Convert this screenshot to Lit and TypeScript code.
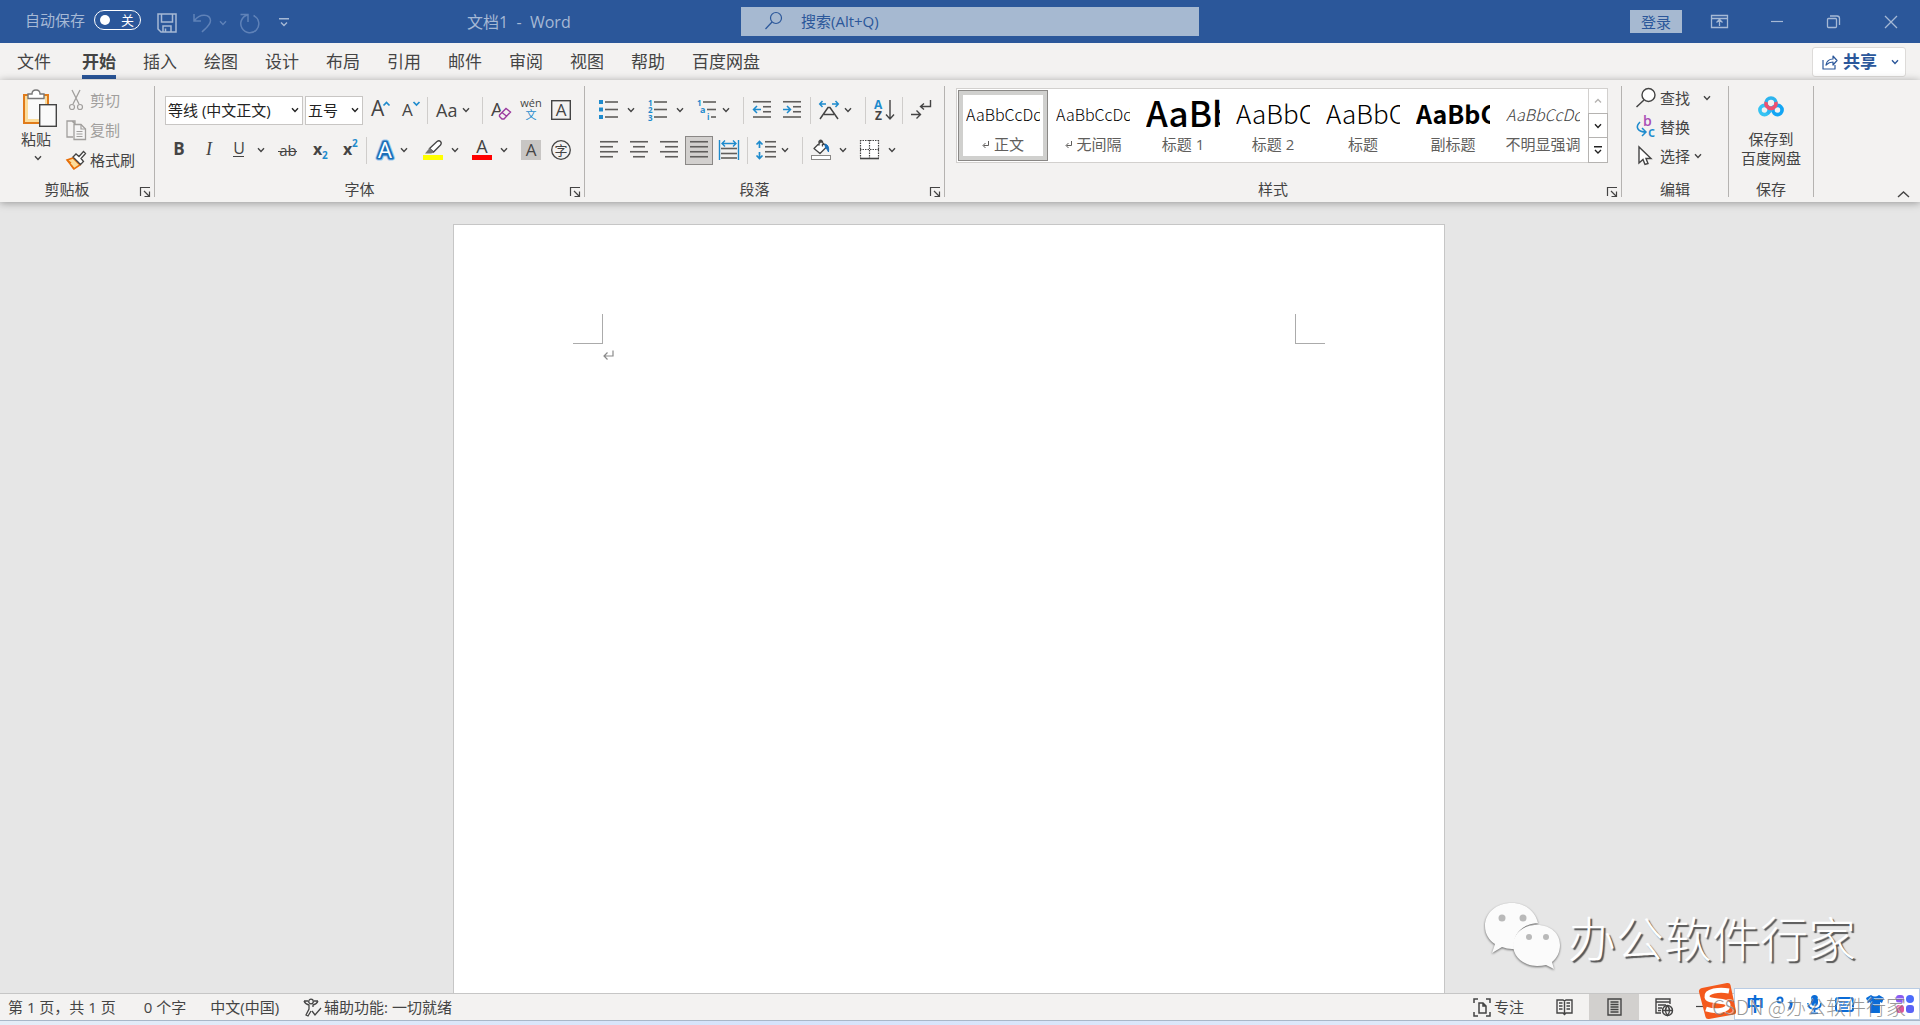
import { LitElement, html, svg, css, SVGTemplateResult, TemplateResult } from "lit";
import { customElement, state } from "lit/decorators.js";
import { classMap } from "lit/directives/class-map.js";

const icon = (content: SVGTemplateResult, w = 20, h = 20) =>
  html`<svg class="icon" width=${w} height=${h} viewBox="0 0 ${w} ${h}" aria-hidden="true">${content}</svg>`;

const chevron = () =>
  html`<svg class="icon" width="8" height="6" viewBox="0 0 8 6" aria-hidden="true">
    <path d="M1 1.2L4 4.4L7 1.2" fill="none" stroke="currentColor" stroke-width="1.4" />
  </svg>`;

const INK = "#444444";
const LINE = "#605e5c";
const BLUE = "#1e8bcd";

const hline = (x1: number, x2: number, y: number) =>
  svg`<path d="M${x1} ${y}H${x2}" stroke=${LINE} stroke-width="1.6" />`;

const glyph = (t: string, x: number, y: number, size: number, color = INK, weight = 400, anchor = "start") =>
  svg`<text x=${x} y=${y} font-size=${size} fill=${color} font-weight=${weight} text-anchor=${anchor}>${t}</text>`;

const icons = {
  grow: svg`${glyph("A", 2, 16, 21)}<path d="M14.5 5.5l3-3 3 3" fill="none" stroke=${BLUE} stroke-width="1.7" />`,
  shrink: svg`${glyph("A", 3, 16, 17)}<path d="M14.5 2l3 3 3-3" fill="none" stroke=${BLUE} stroke-width="1.7" />`,
  clear: svg`${glyph("A", 0, 16, 19)}
    <path d="M8.5 14.5L15 8l4.5 4-6.5 7h-2l-2.500-2.500z" fill="#f3f2f1" stroke="#f3f2f1" stroke-width="3" />
    <path d="M8.500 15L15 8.500l4.500 3.500-6.500 7h-2l-2.500-2.500zM11 12.500l5 4" fill="none" stroke="#9b3b9f" stroke-width="1.400" />`,
  phonetic: svg`${glyph("wén", 10, 7, 11, INK, 400, "middle")}${glyph("文", 10, 19, 11, BLUE, 400, "middle")}`,
  boxed: svg`<rect x="0.700" y="0.700" width="18.600" height="18.600" fill="none" stroke=${INK} stroke-width="1.400" />${glyph("A", 10, 16, 17, INK, 400, "middle")}`,
  bold: glyph("B", 10, 15, 17, INK, 700, "middle"),
  italic: svg`<text x="10" y="15" font-size="18" fill=${INK} font-style="italic" font-family="Liberation Serif" text-anchor="middle">I</text>`,
  underline: svg`${glyph("U", 10, 14, 16, INK, 400, "middle")}<path d="M4 16.500h11" stroke=${INK} stroke-width="1" />`,
  strike: svg`${glyph("ab", 10, 16, 15, INK, 400, "middle")}<path d="M0 11.500h19" stroke=${INK} stroke-width="1" />`,
  sub: svg`${glyph("x", 5, 15, 16, INK, 700)}${glyph("2", 14, 19, 10, BLUE, 700)}`,
  sup: svg`${glyph("x", 5, 15, 16, INK, 700)}${glyph("2", 14, 7, 10, BLUE, 700)}`,
  effect: svg`<g font-size="22" font-weight="600" text-anchor="middle" stroke-linejoin="round">
      <text x="10" y="18" fill="#9cc9ee" stroke="#9cc9ee" stroke-width="5">A</text>
      <text x="10" y="18" fill="#ffffff" stroke="#1a6fb8" stroke-width="3">A</text>
      <text x="10" y="18" fill="#ffffff" font-weight="400">A</text></g>`,
  highlight: svg`<path d="M6.500 8.500L14 1.500q2-1.500 3.500 0t0 3.500L10.500 12z" fill="#ffffff" stroke=${INK} stroke-width="1.300" />
    <path d="M6.500 8L11 12.500 8 13.500H2z" fill="#777777" /><rect x="0" y="15" width="20" height="5" fill="#ffff00" />`,
  color: svg`${glyph("A", 10, 13, 18, INK, 400, "middle")}<rect x="0" y="15" width="20" height="5" fill="#ff0000" />`,
  shade: svg`<rect width="20" height="20" fill="#c8c6c4" />${glyph("A", 10, 16, 17, INK, 400, "middle")}`,
  circled: svg`<circle cx="10" cy="10" r="9.300" fill="none" stroke=${INK} stroke-width="1.300" />${glyph("字", 10, 15, 13, INK, 400, "middle")}`,
  bullets: svg`<path d="M0 0h4v4H0zM0 7.500h4v4H0zM0 15h4v4H0z" fill=${BLUE} />${[2, 9.5, 17].map((y) => hline(6, 19, y))}`,
  numbers: svg`${["1", "2", "3"].map((n, i) => glyph(n, 0, 5.5 + i * 7.5, 8, BLUE, 700))}${[2, 9.5, 17].map((y) => hline(6, 19, y))}`,
  multi: svg`${glyph("1", 0, 5.5, 8, BLUE, 700)}${glyph("a", 3, 13, 9, BLUE, 700)}${glyph("i", 10, 20, 8, BLUE, 700)}${hline(6, 19, 2)}${hline(10, 19, 9.5)}${hline(14, 19, 17)}`,
  outdent: svg`${hline(1, 19, 1.75)}${hline(11, 19, 6.75)}${hline(11, 19, 11.75)}${hline(1, 19, 17)}<path d="M9 9.500H2M5 6L1.500 9.500 5 13" fill="none" stroke=${BLUE} stroke-width="1.500" />`,
  indent: svg`${hline(1, 19, 1.75)}${hline(11, 19, 6.75)}${hline(11, 19, 11.75)}${hline(1, 19, 17)}<path d="M1 9.500H8M5 6L8.500 9.500 5 13" fill="none" stroke=${BLUE} stroke-width="1.500" />`,
  scale: svg`<path d="M1 19L9 7.500h2L19 19M5 14.500h10" fill="none" stroke=${INK} stroke-width="1.500" />
    <path d="M7 4H1M3.500 1L0.700 4 3.500 7M13 4h6M16.500 1L19.300 4 16.500 7" fill="none" stroke=${BLUE} stroke-width="1.500" />`,
  sort: svg`${glyph("A", 0, 9, 12, BLUE, 700)}${glyph("Z", 1, 20, 12, INK, 700)}<path d="M16 0v19M12 14.500l4 4.500 4-4.500" fill="none" stroke=${INK} stroke-width="1.400" />`,
  marks: svg`<path d="M19.500 0V6.500H10M13 3.500l-3.500 3 3.500 3M0 14.500h9M5.500 10.500l4 4-4 4" fill="none" stroke=${INK} stroke-width="1.400" />`,
  left: svg`${hline(1, 19, 1.75)}${hline(1, 14, 6.75)}${hline(1, 19, 11.75)}${hline(1, 14, 16.75)}`,
  center: svg`${hline(1, 19, 1.75)}${hline(4, 16, 6.75)}${hline(1, 19, 11.75)}${hline(4, 16, 16.75)}`,
  right: svg`${hline(1, 19, 1.75)}${hline(6, 19, 6.75)}${hline(1, 19, 11.75)}${hline(6, 19, 16.75)}`,
  justify: svg`${[1.75, 6.75, 11.75, 16.75].map((y) => hline(1, 19, y))}`,
  distribute: svg`<path d="M0.500 0v20M19.500 0v20M3 3.500h14M6 0.500L3 3.500l3 3M14 0.500l3 3-3 3" fill="none" stroke=${BLUE} stroke-width="1.400" />${[8.5, 13.5, 18].map((y) => hline(2, 18, y))}`,
  spacing: svg`<path d="M3.500 1.500v6.500M0.500 4.500l3-3 3 3M3.500 12v6.500M0.500 15.500l3 3 3-3" fill="none" stroke=${BLUE} stroke-width="1.700" />${[1.75, 6.75, 11.75, 16.75].map((y) => hline(9, 20, y))}`,
  fill: svg`<path d="M10 1.500L3 8.500l6 5 7-7zM8 5.500V1.500q2-2.500 3.500 0v5" fill="#ffffff" stroke=${INK} stroke-width="1.300" stroke-linejoin="round" />
    <path d="M14 4q4.500 1 3.500 8q-1.500-4-3-4z" fill="#1a6fb8" stroke="#1a6fb8" /><rect x="0.500" y="15.500" width="19" height="4" fill="#ffffff" stroke="#8a8886" />`,
  border: svg`<rect x="0.500" y="0.500" width="18" height="18" fill="#ffffff" />
    <path d="M0 0.500h19M0.500 0v18M18.500 0v18M9.500 0v18M0 9.500h19" fill="none" stroke=${INK} stroke-width="1.200" stroke-dasharray="1.500 1" />
    <path d="M0 18.500h19" stroke=${INK} stroke-width="1.600" />`,
  paste: svg`<path d="M2 6h24v28H2z" fill="#fbdc9b" stroke="#e07b1a" stroke-width="2" /><path d="M6 9h17v21H6z" fill="#fafafa" />
    <path d="M6 9.500V5h4q0-4 4-4t4 4h4v4.500z" fill="#ffffff" stroke="#777777" stroke-width="1.400" />
    <rect x="17.700" y="15.700" width="16.600" height="21.600" fill="#fafafa" stroke="#444444" stroke-width="1.400" />`,
  cut: svg`<path d="M6 0l7 14M14 0L7 14" fill="none" stroke="#a19f9d" stroke-width="1.300" /><circle cx="6" cy="17" r="2.500" fill="none" stroke="#a19f9d" stroke-width="1.200" /><circle cx="14" cy="17" r="2.500" fill="none" stroke="#a19f9d" stroke-width="1.200" />`,
  copy: svg`<path d="M7 17H1V1h5l3 3M6 1h3v3" fill="none" stroke="#a19f9d" stroke-width="1.300" /><path d="M8 4.500h7l4.500 4.500v10.500H8z" fill="#f5f5f5" stroke="#a19f9d" stroke-width="1.300" /><path d="M15 4.500V9h4.500M10.500 11.500h6M10.500 14h6M10.500 16.500h6" fill="none" stroke="#a19f9d" stroke-width="1.200" />`,
  brush: svg`<path d="M1 10l6-2 7 7-6 4z" fill="#fbdc9b" stroke="#e8700a" stroke-width="1.600" /><path d="M1 10l4 3M8 19l-3-4" stroke="#e8700a" stroke-width="1.500" />
    <path d="M7 7l3-3 3 2.500L17.500 1.500l2 2L15 8.500l2.500 3-3 3z" fill="#ffffff" stroke="#444444" stroke-width="1.300" />`,
  find: svg`<circle cx="12.500" cy="7" r="6.500" fill="#ffffff" stroke=${INK} stroke-width="1.400" /><path d="M8 12L0.500 19" stroke=${INK} stroke-width="1.500" />`,
  replace: svg`${glyph("b", 7, 9, 14, "#a94db5", 600)}${glyph("c", 12, 20, 14, BLUE, 600)}<path d="M4 5q-4 4-2 7t8 3M6 11l4 4-4 4" fill="none" stroke=${BLUE} stroke-width="1.500" />`,
  select: svg`<path d="M3 1v16l4-3.500 2 5 3-1-2-5h5z" fill="#ffffff" stroke=${INK} stroke-width="1.400" />`,
  launcher: svg`<path d="M0.500 9V0.500H10M4 4l5 5M9.500 4.500v5h-5" fill="none" stroke=${INK} stroke-width="1.200" />`,
  save: svg`<path d="M1 1h18v18H4l-3-3zM4.500 1v8h11V1M6 19v-6h8v6M8.500 15.500V19" fill="none" stroke="currentColor" stroke-width="1.500" />`,
  undo: svg`<path d="M1 1v7h7M1.500 7.500C7 0 17 1 17.500 7.500C17.500 12 13 15 9 19" fill="none" stroke="currentColor" stroke-width="1.500" />`,
  redo: svg`<path d="M0.500 1.500H8V9M13.500 2.500A9 9 0 1 1 7.500 2" fill="none" stroke="currentColor" stroke-width="1.500" />`,
  share: svg`<path d="M1 5v9h12v-4M4 10q1-6 7-6V1l4 4.500-4 4.500V7q-4 0-7 3z" fill="none" stroke="#2b579a" stroke-width="1.200" stroke-linejoin="round" />`,
  baidu: svg`<g fill="none" stroke-width="3.600"><circle cx="6.500" cy="14" r="4.600" stroke="#35c3f2" /><circle cx="19.500" cy="14" r="4.600" stroke="#12a5f4" />
    <path d="M9.500 17.500L16 10.500" stroke="#2bb7f5" /><circle cx="13" cy="7" r="5" stroke="#2cb4ee" /><path d="M8.200 6a5 5 0 1 0 9.600 0" stroke="#f0506e" /></g>`,
  access: svg`<g fill="none" stroke=${INK} stroke-width="1.300"><circle cx="8" cy="3.500" r="2.300" /><path d="M1 3q1 3 5 4v4l-3 6 2 1 3-5M15 3q-1 3-5 4v2M5 3H1M11 3h4M9 13l3 4 6-7" /></g>`,
  focus: svg`<g fill="none" stroke=${INK} stroke-width="1.500"><path d="M5 1H1v4M1 14v4h4M13 1h4v4M17 14v4h-4M6 5h4l3 3v7H6zM10 5v3h3" /></g>`,
  read: svg`<g fill="none" stroke=${INK} stroke-width="1.400"><path d="M1 2h6l1.500 1L10 2h6v13h-6l-1.500 1.500L7 15H1zM8.500 3v13M3 5h3.500M3 8h3.500M3 11h3.500M10.500 5H14M10.500 8H14M10.500 11H14" /></g>`,
  print: svg`<g fill="none" stroke=${INK} stroke-width="1.400"><path d="M1 1h13v16H1zM3.500 4h8M3.500 6.500h8M3.500 9h8M3.500 11.500h8M3.500 14h8" /></g>`,
  web: svg`<g fill="none" stroke=${INK} stroke-width="1.400"><path d="M6 15H1V1h14v5M1 4h14M3 7h8M3 10h4M3 12.500h3" /><circle cx="12.500" cy="12.500" r="5" /><path d="M7.500 12.500h10M12.500 7.500q-4 5 0 10q4-5 0-10" /></g>`,
};

type IconName = keyof typeof icons;
interface Tool { icon: IconName; label: string; drop?: "split" | "menu" }
type Entry = Tool | "|";

const fontRow1: Entry[] = [
  { icon: "grow", label: "增大字号" }, { icon: "shrink", label: "减小字号" }, "|",
];
const fontRow1b: Entry[] = [
  "|", { icon: "clear", label: "清除所有格式" }, { icon: "phonetic", label: "拼音指南" }, { icon: "boxed", label: "字符边框" },
];
const fontRow2: Entry[] = [
  { icon: "bold", label: "加粗" }, { icon: "italic", label: "倾斜" }, { icon: "underline", label: "下划线", drop: "split" },
  { icon: "strike", label: "删除线" }, { icon: "sub", label: "下标" }, { icon: "sup", label: "上标" }, "|",
  { icon: "effect", label: "文本效果", drop: "menu" }, { icon: "highlight", label: "突出显示", drop: "split" },
  { icon: "color", label: "字体颜色", drop: "split" }, { icon: "shade", label: "字符底纹" }, { icon: "circled", label: "带圈字符" },
];
const paraRow1: Entry[] = [
  { icon: "bullets", label: "项目符号", drop: "split" }, { icon: "numbers", label: "编号", drop: "split" },
  { icon: "multi", label: "多级列表", drop: "menu" }, "|",
  { icon: "outdent", label: "减少缩进量" }, { icon: "indent", label: "增加缩进量" }, "|",
  { icon: "scale", label: "中文版式", drop: "menu" }, "|", { icon: "sort", label: "排序" }, "|", { icon: "marks", label: "编辑标记" },
];
const paraRow2: Entry[] = [
  { icon: "left", label: "左对齐" }, { icon: "center", label: "居中" }, { icon: "right", label: "右对齐" },
  { icon: "justify", label: "两端对齐" }, { icon: "distribute", label: "分散对齐" }, "|",
  { icon: "spacing", label: "行和段落间距", drop: "menu" }, "|",
  { icon: "fill", label: "底纹", drop: "split" }, { icon: "border", label: "边框", drop: "split" },
];

const tabs = ["文件", "开始", "插入", "绘图", "设计", "布局", "引用", "邮件", "审阅", "视图", "帮助", "百度网盘"];

const gallery = [
  { name: "正文", sample: "AaBbCcDd", kind: "body", mark: true },
  { name: "无间隔", sample: "AaBbCcDd", kind: "body", mark: true },
  { name: "标题 1", sample: "AaBb", kind: "h1" },
  { name: "标题 2", sample: "AaBbC", kind: "h2" },
  { name: "标题", sample: "AaBbC", kind: "h2" },
  { name: "副标题", sample: "AaBbC", kind: "subtitle" },
  { name: "不明显强调", sample: "AaBbCcDd", kind: "subtle" },
];

@customElement("app-root")
export class AppRoot extends LitElement {
  @state() private tab = "开始";
  @state() private align: IconName = "justify";
  @state() private style_ = "正文";

  static styles = css`
    :host {
      display: flex;
      flex-direction: column;
      height: 100vh;
      overflow: hidden;
      position: relative;
      background: #e6e6e6;
      color: #444444;
      font: 15px/20px "Open Sans", "Noto Sans CJK SC", sans-serif;
    }
    * { box-sizing: border-box; }
    button, select, input { font: inherit; color: inherit; background: none; border: 0; padding: 0; margin: 0; }
    button { display: flex; align-items: center; justify-content: center; white-space: nowrap; }
    .icon { display: block; flex: none; overflow: visible; }

    .title-bar { display: grid; grid-template-columns: 741fr 458fr 721fr; align-items: center; height: 43px; flex: none; background: #2b579a; color: #a6b9d5; }
    .quick { display: flex; align-items: center; padding-left: 25px; }
    .autosave { display: flex; align-items: center; gap: 9px; margin-top: -3px; }
    .switch { display: flex; align-items: center; justify-content: space-between; width: 47px; height: 20px; padding: 0 6px 0 5px; border: 1px solid #ffffff; border-radius: 10px; color: #ffffff; font-size: 13px; }
    .switch input { appearance: none; width: 10px; height: 10px; border-radius: 5px; background: #ffffff; }
    .save { margin: 3px 0 0 16px; }
    .undo { margin: 3px 0 0 16px; gap: 6px; color: #5f82b8; }
    .redo { margin: 3px 0 0 13px; color: #5f82b8; }
    .customize { margin: 2px 0 0 19px; }
    .doc-name { margin-left: 178px; font-size: 16px; white-space: pre; }
    .search { display: flex; align-items: center; gap: 19px; height: 29px; padding: 0 0 1px 24px; background: #a6b9d1; color: #2b579a; }
    .search input { flex: 1; min-width: 0; height: 24px; padding-bottom: 1px; outline: none; }
    .search input::placeholder { color: #2b579a; opacity: 1; }
    .window { display: flex; align-items: center; justify-content: flex-end; padding-right: 19px; }
    .login { width: 52px; height: 23px; margin-right: 28px; background: #a6b9d1; color: #2b579a; }
    .win { width: 20px; height: 20px; margin-left: 37px; }
    .w-mode { margin-left: 0; }

    .tab-bar { display: flex; justify-content: space-between; height: 37px; flex: none; background: #f3f2f1; padding: 0 14px 0 17px; }
    .tabs { display: flex; gap: 27px; }
    .tab { font-size: 17px; height: 36px; padding-top: 5px; border-bottom: 4px solid transparent; }
    .tab:first-child { margin-right: 4px; }
    .tab.on { font-weight: 700; border-color: #2b579a; }
    .share { height: 30px; margin-top: 4px; padding: 0 6px 0 9px; border: 1px solid #dddbd9; border-radius: 3px; background: #ffffff; color: #2b579a; font-size: 17px; font-weight: 700; gap: 5px; }
    .share .icon:last-child { margin-left: 9px; }

    .ribbon { display: flex; flex: none; height: 122px; background: #f3f2f1; box-shadow: 0 1px 8px rgba(0, 0, 0, 0.35); position: relative; }
    .group { position: relative; display: flex; flex-direction: column; margin: 6px 0 5px; border-right: 1px solid #b5b3b1; }
    .group-body { flex: 1; min-height: 0; }
    .group-name { height: 16px; line-height: 16px; padding-right: 20px; text-align: center; }
    .group-name.plain { padding-right: 0; }
    .launch { position: absolute; right: 4px; bottom: 0; width: 10px; height: 10px; }
    .g-clip .group-body { display: flex; gap: 10px; padding: 3px 19px 0 21px; }
    .paste { flex-direction: column; justify-content: flex-start; align-items: flex-start; }
    .paste .icon:first-child { margin: 0 0 2px 1px; }
    .paste .icon:last-child { margin: 6px 0 0 13px; }
    .clip-list { display: flex; flex-direction: column; gap: 8px; margin-left: -1px; }
    .clip-list button { gap: 4px; height: 22px; justify-content: flex-start; }
    .off { color: #a19f9d; }
    .g-tools .group-body { padding: 9px 8px 0 9px; display: flex; flex-direction: column; gap: 10px; }
    .row { display: flex; align-items: center; height: 30px; }
    .row-fonts { padding-left: 1px; }
    .tool { width: 30px; height: 30px; }
    .tool.on { width: 28px; height: 29px; margin: 0 1px; background: #d2d0ce; border: 1px solid #8a8886; }
    .drop { width: 19px; height: 30px; justify-content: flex-start; padding-left: 3px; }
    .tool.menu { width: 48px; justify-content: flex-start; padding-left: 5px; gap: 5px; }
    .tool.case { font-size: 18px; gap: 5px; }
    .rule { width: 1px; height: 27px; margin: 0 3px; background: #cfcdcb; }
    .combo { display: flex; align-items: center; position: relative; height: 29px; background: #ffffff; border: 1px solid #c8c6c4; color: #222222; }
    .combo select { appearance: none; width: 100%; height: 100%; padding-left: 2px; outline: none; }
    .combo .icon { position: absolute; right: 3px; pointer-events: none; }
    .family { width: 138px; margin-right: 2px; }
    .size { width: 58px; margin-right: 1px; }

    .g-styles .group-body { padding: 2px 13px 0 11px; }
    .gallery { display: flex; background: #ffffff; border: 1px solid #d2d0ce; height: 75px; }
    .cards { display: flex; padding: 1px; }
    .card { flex-direction: column; align-items: stretch; justify-content: flex-end; width: 90px; height: 71px; padding: 0 8px 5px; color: #605e5c; }
    .card.on { border: 1px solid #8a8886; box-shadow: inset 0 0 0 4px #d0d0ce; padding: 0 7px 4px; }
    .sample { display: flex; height: 36px; align-items: center; overflow: hidden; text-align: left; color: #000000; font-family: "Noto Sans CJK SC", sans-serif; font-weight: 300; font-size: 16px; line-height: 36px; }
    .h1 { font-size: 35px; font-weight: 500; line-height: 32px; align-items: flex-start; }
    .h2 { font-size: 26px; line-height: 34px; align-items: flex-start; }
    .subtitle { font-size: 25px; font-weight: 700; line-height: 34px; align-items: flex-start; }
    .subtle { font-style: italic; color: #404040; }
    .caption { display: flex; align-items: center; justify-content: center; gap: 5px; height: 24px; margin: 0 -6px; }
    .scroll { display: flex; flex-direction: column; width: 20px; margin: -1px; }
    .scroll button { flex: 1; border: 1px solid #b5b3b1; color: #222222; }
    .scroll button:first-child { border-color: #d2d0ce; color: #b5b3b1; }
    .scroll button + button { margin-top: -1px; }

    .g-edit { margin-top: 3px; border: 0; padding-top: 0; }
    .g-edit .group-body { display: flex; flex-direction: column; padding: 0 17px 0 14px; }
    .g-edit button { height: 29px; justify-content: flex-start; gap: 4px; }
    .g-edit .wide { margin-left: 9px; }
    .g-save { border-left: 1px solid #b5b3b1; }
    .g-save .group-body { display: flex; padding: 10px 12px 0; }
    .save-pan { flex-direction: column; line-height: 19px; justify-content: flex-start; }
    .save-pan .icon { margin-bottom: 13px; }
    .collapse { position: absolute; right: 10px; bottom: 4px; }

    .canvas { flex: 1; min-height: 0; display: flex; justify-content: center; padding: 22px 22px 0 0; overflow: hidden; }
    .page { display: grid; grid-template-rows: 119px auto; width: 992px; background: #ffffff; border: 1px solid #c6c6c6; border-bottom: 0; }
    .corners { display: flex; justify-content: space-between; align-items: flex-end; padding: 0 119px; }
    .corner { width: 30px; height: 30px; border-bottom: 1px solid #ababab; }
    .corner.l { border-right: 1px solid #ababab; }
    .corner.r { border-left: 1px solid #ababab; }
    .text { padding: 6px 148px 0 149px; }

    .status { display: flex; flex: none; justify-content: space-between; height: 28px; background: #f3f2f1; border-top: 1px solid #c6c6c6; border-bottom: 1px solid #a9b7c8; }
    .facts, .views { display: flex; align-items: center; }
    .facts { padding-left: 8px; gap: 24px; }
    .facts button { gap: 3px; }
    .facts button:first-child { margin-right: 4px; }
    .views { padding-right: 211px; }
    .focus { gap: 3px; margin-right: 15px; }
    .view { width: 50px; height: 26px; }
    .view.on { background: #d2d0ce; }
    .desktop { flex: none; height: 4px; background: linear-gradient(90deg, #e4edf7, #d5e3fb 40%, #e4edf7); }

    .ime { position: absolute; right: 0; bottom: 5px; display: flex; align-items: center; gap: 12px; width: 186px; height: 32px; padding-left: 11px; background: #ffffff; border: 1px solid #b9cce4; color: #0a6bd6; }
    .ime-logo { position: absolute; right: 183px; bottom: 5px; }
    .ime b { font-size: 18px; width: 18px; }
    .blog { position: absolute; right: 14px; bottom: 4px; color: rgba(120, 120, 120, 0.75); font: 300 20px/28px "Noto Sans CJK SC", sans-serif; text-shadow: -1px -1px 0 rgba(255, 255, 255, 0.6); white-space: nowrap; }
    .brand { position: absolute; right: 64px; bottom: 54px; display: flex; align-items: center; gap: 7px; color: #ffffff; font: 300 48px/70px "Noto Sans CJK SC", sans-serif; text-shadow: 2px 2px 1px #555555; white-space: nowrap; }
    .brand .icon { filter: drop-shadow(0 1px 1px #666666); }
  `;

  private entry(e: Entry): TemplateResult {
    if (e === "|") return html`<span class="rule"></span>`;
    if (e.drop === "menu") {
      return html`<button class="tool menu" title=${e.label} aria-label=${e.label}>${icon(icons[e.icon])}<span>${chevron()}</span></button>`;
    }
    return html`<button class=${classMap({ tool: true, on: this.align === e.icon })} title=${e.label} aria-label=${e.label}
        @click=${() => { if (["left", "center", "right", "justify", "distribute"].includes(e.icon)) this.align = e.icon; }}>
        ${icon(icons[e.icon])}</button>${e.drop ? html`<button class="drop" aria-label="${e.label}选项">${chevron()}</button>` : ""}`;
  }

  private groupName(name: string, launcher = true) {
    return html`<div class=${classMap({ "group-name": true, plain: !launcher })}>${name}</div>
      ${launcher ? html`<button class="launch" aria-label="${name}设置">${icon(icons.launcher, 10, 10)}</button>` : ""}`;
  }

  private titleBar() {
    return html`<header class="title-bar">
      <div class="quick">
        <label class="autosave">自动保存<span class="switch"><input type="checkbox" role="switch" /><span>关</span></span></label>
        <button class="save" aria-label="保存">${icon(icons.save)}</button>
        <button class="undo" aria-label="撤消">${icon(icons.undo)}${chevron()}</button>
        <button class="redo" aria-label="重复">${icon(icons.redo)}</button>
        <button class="customize" aria-label="自定义快速访问工具栏">${icon(svg`<path d="M0 0.700h10M2 4.500l3 3 3-3" fill="none" stroke="currentColor" stroke-width="1.400" />`, 10, 9)}</button>
        <span class="doc-name">文档1  -  Word</span>
      </div>
      <label class="search">
        ${icon(svg`<circle cx="11" cy="6" r="5.500" fill="none" stroke="currentColor" stroke-width="1.200" /><path d="M7 10L0.500 17" stroke="currentColor" stroke-width="1.200" />`, 17, 18)}
        <input type="search" placeholder="搜索(Alt+Q)" aria-label="搜索" />
      </label>
      <div class="window">
        <button class="login">登录</button>
        <button class="win w-mode" aria-label="功能区显示选项">${icon(svg`<path d="M1.500 3.500h16v12h-16zM1.500 6.500h16M9.500 14V8M6.500 10.500l3-3 3 3" fill="none" stroke="currentColor" stroke-width="1.300" />`)}</button>
        <button class="win" aria-label="最小化">${icon(svg`<path d="M4 9.500h12" stroke="currentColor" stroke-width="1.200" />`)}</button>
        <button class="win" aria-label="还原">${icon(svg`<rect x="3.500" y="6.500" width="9" height="9" rx="1" fill="none" stroke="currentColor" stroke-width="1.300" /><path d="M6 4h7q2.500 0 2.500 2.500V13" fill="none" stroke="currentColor" stroke-width="1.300" />`)}</button>
        <button class="win" aria-label="关闭">${icon(svg`<path d="M4 4l12 12M16 4L4 16" stroke="currentColor" stroke-width="1.300" />`)}</button>
      </div>
    </header>`;
  }

  private tabBar() {
    return html`<div class="tab-bar">
      <nav class="tabs" role="tablist">
        ${tabs.map((t) => html`<button role="tab" aria-selected=${t === this.tab} class=${classMap({ tab: true, on: t === this.tab })} @click=${() => (this.tab = t)}>${t}</button>`)}
      </nav>
      <button class="share">${icon(icons.share, 16, 15)}共享${chevron()}</button>
    </div>`;
  }

  private ribbon() {
    return html`<section class="ribbon">
      <div class="group g-clip">
        <div class="group-body">
          <button class="paste">${icon(icons.paste, 35, 38)}粘贴${chevron()}</button>
          <div class="clip-list">
            <button class="off">${icon(icons.cut)}剪切</button>
            <button class="off">${icon(icons.copy)}复制</button>
            <button>${icon(icons.brush)}格式刷</button>
          </div>
        </div>
        ${this.groupName("剪贴板")}
      </div>
      <div class="group g-tools">
        <div class="group-body">
          <div class="row row-fonts">
            <span class="combo family"><select aria-label="字体"><option>等线 (中文正文)</option></select>${chevron()}</span>
            <span class="combo size"><select aria-label="字号"><option>五号</option></select>${chevron()}</span>
            ${fontRow1.map((e) => this.entry(e))}
            <button class="tool menu case" aria-label="更改大小写">Aa${chevron()}</button>
            ${fontRow1b.map((e) => this.entry(e))}
          </div>
          <div class="row">${fontRow2.map((e) => this.entry(e))}</div>
        </div>
        ${this.groupName("字体")}
      </div>
      <div class="group g-tools">
        <div class="group-body">
          <div class="row">${paraRow1.map((e) => this.entry(e))}</div>
          <div class="row">${paraRow2.map((e) => this.entry(e))}</div>
        </div>
        ${this.groupName("段落")}
      </div>
      <div class="group g-styles">
        <div class="group-body">
          <div class="gallery">
            <div class="cards">
              ${gallery.map((g) => html`<button class=${classMap({ card: true, on: g.name === this.style_ })} @click=${() => (this.style_ = g.name)}>
                <span class="sample ${g.kind}">${g.sample}</span>
                <span class="caption">${g.mark ? icon(svg`<path d="M6.500 0v4.500H1.500M3.500 2l-2.500 2.500 2.500 2.500" fill="none" stroke="#605e5c" />`, 7, 7) : ""}${g.name}</span>
              </button>`)}
            </div>
            <div class="scroll">
              <button aria-label="上一行">${icon(svg`<path d="M1 4.500l3-3 3 3" fill="none" stroke="currentColor" stroke-width="1.400" />`, 8, 6)}</button>
              <button aria-label="下一行">${chevron()}</button>
              <button aria-label="其他">${icon(svg`<path d="M0 0.700h8M1 4l3 3 3-3" fill="none" stroke="currentColor" stroke-width="1.400" />`, 8, 8)}</button>
            </div>
          </div>
        </div>
        ${this.groupName("样式")}
      </div>
      <div class="group g-edit">
        <div class="group-body">
          <button>${icon(icons.find)}查找<span class="wide">${chevron()}</span></button>
          <button>${icon(icons.replace)}替换</button>
          <button>${icon(icons.select)}选择${chevron()}</button>
        </div>
        ${this.groupName("编辑", false)}
      </div>
      <div class="group g-save">
        <div class="group-body">
          <button class="save-pan">${icon(icons.baidu, 26, 21)}<span>保存到</span><span>百度网盘</span></button>
        </div>
        ${this.groupName("保存", false)}
      </div>
      <button class="collapse" aria-label="折叠功能区">${icon(svg`<path d="M1 7l5.500-5 5.500 5" fill="none" stroke="currentColor" stroke-width="1.400" />`, 13, 8)}</button>
    </section>`;
  }

  private overlays() {
    return html`
      <div class="brand">
        ${icon(svg`<path d="M28 1C12 1 1 11 1 24c0 8 4 14 10 18l-3 9 10-6q5 2 10 2h2C28 32 38 22 54 21 51 9 41 1 28 1z" fill="#fbfbfb" />
          <path d="M53 23C39 23 29 32 29 43s10 21 24 21q5 0 9-1l8 4-2-7c5-4 8-10 8-17 0-11-9-20-23-20z" fill="#fbfbfb" />
          <g fill="#b9b9b9"><circle cx="18" cy="16" r="3.500" /><circle cx="39" cy="16" r="3.500" /><circle cx="45" cy="35" r="3" /><circle cx="62" cy="35" r="3" /></g>`, 77, 68)}
        <span>办公软件行家</span>
      </div>
      <div class="ime">
        <b>中</b>
        ${icon(svg`<circle cx="4" cy="5" r="2.500" fill="none" stroke="#0a6bd6" stroke-width="2" /><path d="M14 6q3 3-1 8" fill="none" stroke="#0a6bd6" stroke-width="3" />`, 18, 18)}
        ${icon(svg`<rect x="5" y="0" width="7" height="11" rx="3.500" fill="#0a6bd6" /><path d="M2 8q0 6 6.500 6t6.500-6M8.500 14v4M5 18h7" fill="none" stroke="#0a6bd6" stroke-width="1.800" />`, 17, 19)}
        ${icon(svg`<rect x="1" y="2" width="17" height="13" rx="2" fill="none" stroke="#0a6bd6" stroke-width="2" /><path d="M4 6h11M4 9h11M6 12h7" stroke="#0a6bd6" stroke-width="1.600" />`, 19, 17)}
        ${icon(svg`<path d="M5 0q4 3 8 0l5 3-2 5-2-1v11H4V7L2 8 0 3z" fill="#0a6bd6" />`, 18, 18)}
        ${icon(svg`<g><rect x="0" y="0" width="8" height="8" rx="3" fill="#8b5cf0" /><rect x="10" y="0" width="8" height="8" rx="4" fill="#4b6bfb" /><rect x="0" y="10" width="8" height="8" rx="3" fill="#e0559a" /><rect x="10" y="10" width="8" height="8" rx="3" fill="#5a63f5" /></g>`, 18, 18)}
      </div>
      <div class="ime-logo">
        ${icon(svg`<path d="M4 6L29 1q3-0.500 3.500 2L38 29q0.500 3-2 3.500L11 37q-3 0.500-3.500-2L1 10q-0.500-3 3-4z" fill="#f4591c" />
          <path d="M31 9C21 7 8 9 9 15s21 2 21 8-13 7-22 4" fill="none" stroke="#ffffff" stroke-width="5" />`, 39, 38)}
      </div>
      <div class="blog">CSDN @办公软件行家</div>`;
  }

  render() {
    return html`
      ${this.titleBar()} ${this.tabBar()} ${this.ribbon()}
      <main class="canvas">
        <article class="page">
          <div class="corners"><span class="corner l"></span><span class="corner r"></span></div>
          <div class="text">${icon(svg`<path d="M10 0.500V6H1M4.500 2.500L1 6l3.500 3.500" fill="none" stroke="#8a8a8a" stroke-width="1.200" />`, 11, 10)}</div>
        </article>
      </main>
      <footer class="status">
        <div class="facts">
          <button>第 1 页，共 1 页</button><button>0 个字</button><button>中文(中国)</button>
          <button>${icon(icons.access, 18, 19)}辅助功能: 一切就绪</button>
        </div>
        <div class="views">
          <button class="focus">${icon(icons.focus, 18, 19)}专注</button>
          <button class="view" aria-label="阅读视图">${icon(icons.read, 17, 18)}</button>
          <button class="view on" aria-label="页面视图">${icon(icons.print, 15, 18)}</button>
          <button class="view" aria-label="Web 版式视图">${icon(icons.web, 18, 18)}</button>
          <button aria-label="缩小">${icon(svg`<path d="M7 9.500h8" stroke=${INK} stroke-width="1.200" />`)}</button>
        </div>
      </footer>
      <div class="desktop"></div>
      ${this.overlays()}
    `;
  }
}
